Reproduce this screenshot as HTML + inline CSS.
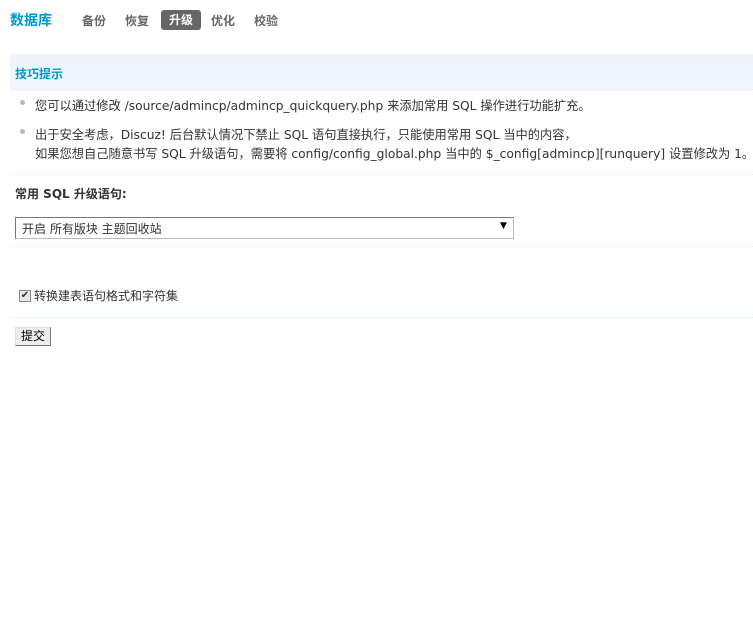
<!DOCTYPE html>
<html><head><meta charset="utf-8"><style>
body{margin:0;background:#fff;font:12px "DejaVu Sans","Liberation Sans","Noto Sans CJK SC",sans-serif;color:#333;width:753px;height:629px;overflow:hidden;position:relative}
.a{position:absolute;white-space:nowrap}
.t{font-weight:bold}
.s{font-size:12.25px}
.dl{position:absolute;left:10px;width:743px;border-top:1px dotted #deeffb}
</style></head><body>
<div class="a t" style="left:10px;top:10px;font-size:14px;color:#09c">数据库</div>
<div class="a t" style="left:82px;top:12px;color:#666">备份</div>
<div class="a t" style="left:125px;top:12px;color:#666">恢复</div>
<div class="a t" style="left:161px;top:10px;width:40px;height:20px;background:#666;border-radius:3px;color:#fff;text-align:center;line-height:20px">升级</div>
<div class="a t" style="left:211px;top:12px;color:#666">优化</div>
<div class="a t" style="left:254px;top:12px;color:#666">校验</div>
<div class="a" style="left:10px;top:54px;width:743px;height:35px;background:linear-gradient(#edf4fb,#f2f8fd);border-bottom:1px dotted #deeffb"></div>
<div class="a t" style="left:15px;top:65px;color:#09c">技巧提示</div>
<div class="a" style="left:20px;top:100px;width:5px;height:5px;border-radius:50%;background:#bbb"></div>
<div class="a s" style="left:35px;top:96px">您可以通过修改 /source/admincp/admincp_quickquery.php 来添加常用 SQL 操作进行功能扩充。</div>
<div class="a" style="left:20px;top:129px;width:5px;height:5px;border-radius:50%;background:#bbb"></div>
<div class="a s" style="left:35px;top:125px">出于安全考虑，Discuz! 后台默认情况下禁止 SQL 语句直接执行，只能使用常用 SQL 当中的内容，</div>
<div class="a s" style="left:35px;top:144px">如果您想自己随意书写 SQL 升级语句，需要将 config/config_global.php 当中的 $_config[admincp][runquery] 设置修改为 1。</div>
<div class="dl" style="top:174px"></div>
<div class="a t" style="left:15px;top:185px">常用 SQL 升级语句:</div>
<div class="a" style="left:15px;top:217px;width:497px;height:20px;border:1px solid #777;border-right-color:#bbb;border-bottom-color:#bbb;background:#fff"></div>
<div class="a" style="left:22px;top:220px">开启 所有版块 主题回收站</div>
<div class="a" style="left:500px;top:221px;font-size:9px;color:#000">▼</div>
<div class="dl" style="top:246px"></div>
<div class="a" style="left:19px;top:290px;width:10px;height:10px;border:1px solid #888;background:#e8e8e8;font-size:10px;line-height:10px;text-align:center;color:#333">✔</div>
<div class="a" style="left:34px;top:287px">转换建表语句格式和字符集</div>
<div class="dl" style="top:317px"></div>
<div class="a" style="left:15px;top:327px;width:34px;height:17px;border:1px solid #777;border-top-color:#ddd;border-left-color:#ddd;background:#eee;text-align:center;line-height:17px;color:#000">提交</div>
</body></html>
